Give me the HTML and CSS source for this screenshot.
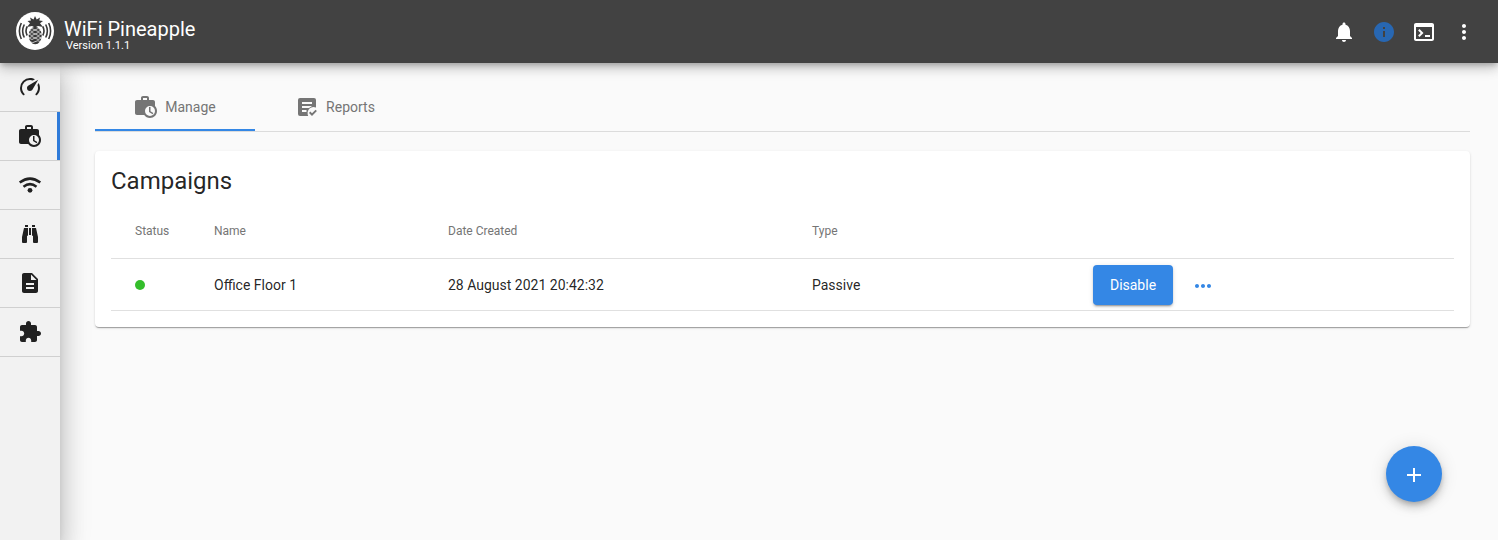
FILE: index.html
```html
<!DOCTYPE html>
<html lang="en">
<head>
<meta charset="utf-8">
<title>WiFi Pineapple</title>
<link rel="stylesheet" href="styles.css">
</head>
<body>
<svg class="defs" aria-hidden="true">
  <symbol id="briefcase-clock" viewBox="0 0 24 24"><path d="M15 12H16.5V16.25L19.36 17.94L18.61 19.16L15 17V12M23 16C23 19.87 19.87 23 16 23C13.61 23 11.5 21.8 10.25 20H3C1.89 20 1 19.1 1 18V7C1 5.89 1.89 5 3 5H7V3C7 1.89 7.89 1 9 1H13C14.11 1 15 1.89 15 3V5H19C20.11 5 21 5.89 21 7V11.1C22.24 12.36 23 14.09 23 16M9 5H13V3H9V5M16 11A5 5 0 0 0 16 21A5 5 0 0 0 16 11Z" fill-rule="evenodd"/></symbol>
</svg>
<header class="toolbar">
  <svg class="logo" viewBox="0 0 38 38">
    <circle cx="19" cy="19" r="19" fill="#fff"/>
    <g fill="#383838">
      <path d="M19 4L20.700 7.500L24 5.500L23.300 8.500L27 9L24 11.200L27 15L22 14L19 15.500L16 14L11 15L14 11.200L11.500 9L15 8.500L14 5.500L17.500 7.500Z"/>
      <ellipse cx="19.200" cy="23.500" rx="6.500" ry="8.800"/>
    </g>
    <g fill="none" stroke="#fff" stroke-width=".7">
      <path d="M13 18q3 3 6 0q3-3 6.500 0M13 18q3-3 6 0q3 3 6.500 0M12.500 22q3.500 3 6.700 0q3-3 6.500 0M12.500 22q3.500-3 6.700 0q3 3 6.500 0M13 26q3 3 6 0q3-3 6.500 0M13 26q3-3 6 0q3 3 6.500 0M14 29.700q3 2 5 0q3-2 5.500 0"/>
    </g>
    <g fill="none" stroke="#383838" stroke-width="1.600">
      <path d="M5.300 11Q1.500 19 5.300 27M8.300 12.500Q5 19 8.300 25.500M11.200 14.500Q8.800 19 11.200 23.500M32.700 11Q36.500 19 32.700 27M29.700 12.500Q33 19 29.700 25.500M26.800 14.500Q29.200 19 26.800 23.500"/>
    </g>
  </svg>
  <div class="brand">
    <span class="title">WiFi Pineapple</span>
    <span class="version">Version 1.1.1</span>
  </div>
  <div class="actions">
    <svg class="icon" viewBox="0 0 24 24"><path d="M12 22c1.100 0 2-.9 2-2h-4c0 1.100.89 2 2 2zm6-6v-5c0-3.070-1.640-5.640-4.500-6.320V4c0-.83-.67-1.500-1.500-1.500s-1.500.67-1.500 1.500v.68C7.630 5.360 6 7.920 6 11v5l-2 2v1h16v-1l-2-2z"/></svg>
    <svg class="icon info" viewBox="0 0 24 24"><path d="M12 2C6.480 2 2 6.480 2 12s4.480 10 10 10 10-4.480 10-10S17.520 2 12 2zm1 15h-2v-6h2v6zm0-8h-2V7h2v2z"/></svg>
    <svg class="icon" viewBox="0 0 24 24"><path d="M20 3H4c-1.110 0-2 .9-2 2v14c0 1.100.89 2 2 2h16c1.100 0 2-.9 2-2V5c0-1.100-.89-2-2-2zm0 16H4V7h16v12zm-2-2h-5v-2h5v2zM7.500 17l-1.410-1.410L8.670 13l-2.590-2.590L7.500 9l4 4-4 4z"/></svg>
    <svg class="icon" viewBox="0 0 24 24"><path d="M12 8c1.100 0 2-.9 2-2s-.9-2-2-2-2 .9-2 2 .9 2 2 2zm0 2c-1.100 0-2 .9-2 2s.9 2 2 2 2-.9 2-2-.9-2-2-2zm0 6c-1.100 0-2 .9-2 2s.9 2 2 2 2-.9 2-2-.9-2-2-2z"/></svg>
  </div>
</header>
<div class="layout">
  <nav class="sidebar">
    <a class="nav-item"><svg class="icon" viewBox="0 0 24 24"><path d="M12,16A3,3 0 0,1 9,13C9,11.880 9.610,10.900 10.500,10.390L20.210,4.770L14.680,14.350C14.180,15.330 13.170,16 12,16M12,3C13.810,3 15.500,3.500 16.970,4.320L14.870,5.530C14,5.190 13,5 12,5A8,8 0 0,0 4,13C4,15.210 4.890,17.210 6.340,18.650H6.350C6.740,19.040 6.740,19.670 6.350,20.060C5.960,20.450 5.320,20.450 4.930,20.070C3.120,18.260 2,15.760 2,13A10,10 0 0,1 12,3M22,13C22,15.760 20.880,18.260 19.070,20.070C18.680,20.450 18.050,20.450 17.660,20.060C17.270,19.670 17.270,19.040 17.660,18.650C19.110,17.200 20,15.210 20,13C20,12 19.810,11 19.460,10.100L20.670,8C21.500,9.500 22,11.180 22,13Z"/></svg></a>
    <a class="nav-item active"><svg class="icon"><use href="#briefcase-clock"/></svg></a>
    <a class="nav-item"><svg class="icon" viewBox="0 0 24 24"><g fill="none" stroke="currentColor" stroke-width="2.500"><path d="M1.700 9.600Q12 1.600 22.300 9.600"/><path d="M5.500 13.700Q12 8.500 18.500 13.700"/></g><circle cx="12" cy="17.300" r="2.400"/></svg></a>
    <a class="nav-item"><svg class="icon" viewBox="0 0 24 24"><path d="M11,6H13V13H11V6M9,20A1,1 0 0,1 8,21H5A1,1 0 0,1 4,20V15L6,6H10V13A1,1 0 0,1 9,14V20M10,5H7V3H10V5M15,20V14A1,1 0 0,1 14,13V6H18L20,15V20A1,1 0 0,1 19,21H16A1,1 0 0,1 15,20M14,5V3H17V5H14Z"/></svg></a>
    <a class="nav-item"><svg class="icon" viewBox="0 0 24 24"><path d="M14 2H6c-1.100 0-1.990.9-1.990 2L4 20c0 1.100.89 2 1.990 2H18c1.100 0 2-.9 2-2V8l-6-6zm2 16H8v-2h8v2zm0-4H8v-2h8v2zm-3-5V3.500L18.500 9H13z"/></svg></a>
    <a class="nav-item"><svg class="icon" viewBox="0 0 24 24"><path d="M20.500 11H19V7c0-1.100-.9-2-2-2h-4V3.500C13 2.120 11.880 1 10.500 1S8 2.120 8 3.500V5H4c-1.100 0-1.990.9-1.990 2v3.800H3.500c1.490 0 2.700 1.210 2.700 2.700s-1.210 2.700-2.700 2.700H2V20c0 1.100.9 2 2 2h3.800v-1.500c0-1.490 1.210-2.700 2.700-2.700 1.490 0 2.700 1.210 2.700 2.700V22H17c1.100 0 2-.9 2-2v-4h1.500c1.380 0 2.500-1.120 2.500-2.500S21.880 11 20.500 11z"/></svg></a>
  </nav>
  <main class="content">
    <div class="tabs">
      <a class="tab selected"><svg class="icon"><use href="#briefcase-clock"/></svg>Manage</a>
      <a class="tab"><svg class="icon" viewBox="0 0 24 24"><path d="M5 3H19A2 2 0 0 1 21 5V12.600Q18.500 11.700 16.400 12.400Q13 13.800 12.600 17.500Q12.500 19.500 13.200 21H5A2 2 0 0 1 3 19V5A2 2 0 0 1 5 3ZM7 7V9H17V7ZM7 11V13H14L17 11ZM7 15V17H11.500V15ZM17 21L14 17.900L15.300 16.600L17 18.300L20.600 14.700L21.900 16Z" fill-rule="evenodd"/></svg>Reports</a>
    </div>
    <section class="card">
      <h1>Campaigns</h1>
      <table>
        <thead><tr><th class="c-status">Status</th><th class="c-name">Name</th><th class="c-date">Date Created</th><th class="c-type">Type</th><th></th></tr></thead>
        <tbody><tr>
          <td><span class="dot"></span></td>
          <td>Office Floor 1</td>
          <td>28 August 2021 20:42:32</td>
          <td>Passive</td>
          <td><div class="row-actions"><button class="disable">Disable</button><svg class="icon more" viewBox="0 0 24 24"><path d="M6 10c-1.100 0-2 .9-2 2s.9 2 2 2 2-.9 2-2-.9-2-2-2zm12 0c-1.100 0-2 .9-2 2s.9 2 2 2 2-.9 2-2-.9-2-2-2zm-6 0c-1.100 0-2 .9-2 2s.9 2 2 2 2-.9 2-2-.9-2-2-2z"/></svg></div></td>
        </tr></tbody>
      </table>
    </section>
  </main>
</div>
<button class="fab" aria-label="Add"><svg class="icon" viewBox="0 0 24 24"><path d="M19 13h-6v6h-2v-6H5v-2h6V5h2v6h6v2z"/></svg></button>
</body>
</html>
```
FILE: styles.css
```css
* { box-sizing: border-box; }
body {
  margin: 0;
  height: 100vh;
  overflow: hidden;
  display: flex;
  flex-direction: column;
  background: #fafafa;
  color: rgba(0, 0, 0, .87);
  font: 14px/20px Roboto, sans-serif;
}
.defs { position: absolute; width: 0; height: 0; }
.icon { display: block; width: 24px; height: 24px; fill: currentColor; flex: none; }

.toolbar {
  position: relative;
  z-index: 3;
  display: flex;
  flex: none;
  height: 63px;
  padding: 0 22px 0 16px;
  background: #424242;
  color: #fff;
  box-shadow: 0 3px 5px -1px rgba(0, 0, 0, .2), 0 6px 10px 0 rgba(0, 0, 0, .14), 0 1px 18px 0 rgba(0, 0, 0, .12);
}
.logo { width: 38px; height: 38px; margin-top: 12px; }
.brand { display: flex; flex-direction: column; margin-left: 10px; padding-top: 17px; }
.title { font-size: 20px; line-height: 24px; }
.version { margin-left: 2px; margin-top: -1px; font-size: 11px; line-height: 11px; }
.actions { display: flex; gap: 16px; margin: 20px 0 0 auto; }
.info { color: #2867b2; }

.layout { display: flex; flex: 1; min-height: 0; }
.sidebar {
  position: relative;
  z-index: 2;
  width: 60px;
  flex: none;
  background: #f2f2f2;
  box-shadow: 0 8px 10px -5px rgba(0, 0, 0, .2), 0 16px 24px 2px rgba(0, 0, 0, .14), 0 6px 30px 5px rgba(0, 0, 0, .12);
}
.nav-item {
  display: flex;
  align-items: center;
  justify-content: center;
  height: 49px;
  border-bottom: 1px solid #d0d0d0;
  color: #212121;
}
.active { box-shadow: inset -3px 0 #2f7bd9; }

.content { flex: 1; padding: 20px 28px 0 35px; }
.tabs { display: flex; height: 49px; border-bottom: 1px solid #dcdcdc; }
.tab {
  display: flex;
  align-items: center;
  justify-content: center;
  gap: 7px;
  width: 160px;
  height: 48px;
  font-weight: 400;
  font-size: 14px;
  color: #757575;
}
.selected { border-bottom: 2px solid #3487e5; padding-top: 2px; }
.card {
  margin-top: 19px;
  height: 176px;
  padding: 16px;
  background: #fff;
  border-radius: 4px;
  box-shadow: 0 2px 1px -1px rgba(0, 0, 0, .2), 0 1px 1px 0 rgba(0, 0, 0, .14), 0 1px 3px 0 rgba(0, 0, 0, .12);
}
h1 { margin: 0; font-size: 24px; line-height: 28px; font-weight: 400; }
table { width: 100%; margin-top: 8px; table-layout: fixed; border-collapse: separate; border-spacing: 0; }
th, td { padding: 0; text-align: left; border-bottom: 1px solid #e0e0e0; }
th { height: 56px; font-size: 12px; font-weight: 400; color: #757575; }
td { height: 52px; }
th:first-child, td:first-child { padding-left: 24px; }
.c-status { width: 103px; }
.c-name { width: 234px; }
.c-date { width: 364px; }
.c-type { width: 281px; }
.dot { display: block; width: 10px; height: 10px; border-radius: 50%; background: #34be2b; }
.row-actions { display: flex; align-items: center; gap: 18px; }
.disable {
  width: 80px;
  height: 40px;
  padding: 0;
  border: 0;
  border-radius: 4px;
  background: #3487e5;
  color: #fff;
  font: 14px/40px Roboto, sans-serif;
  box-shadow: 0 3px 1px -2px rgba(0, 0, 0, .2), 0 2px 2px 0 rgba(0, 0, 0, .14), 0 1px 5px 0 rgba(0, 0, 0, .12);
}
.more { color: #3487e5; margin-top: 2px; }
.fab {
  position: fixed;
  right: 56px;
  bottom: 38px;
  display: flex;
  align-items: center;
  justify-content: center;
  width: 56px;
  height: 56px;
  padding: 2px 0 0;
  border: 0;
  border-radius: 50%;
  background: #3487e5;
  color: #fff;
  box-shadow: 0 3px 5px -1px rgba(0, 0, 0, .2), 0 6px 10px 0 rgba(0, 0, 0, .14), 0 1px 18px 0 rgba(0, 0, 0, .12);
}
```
